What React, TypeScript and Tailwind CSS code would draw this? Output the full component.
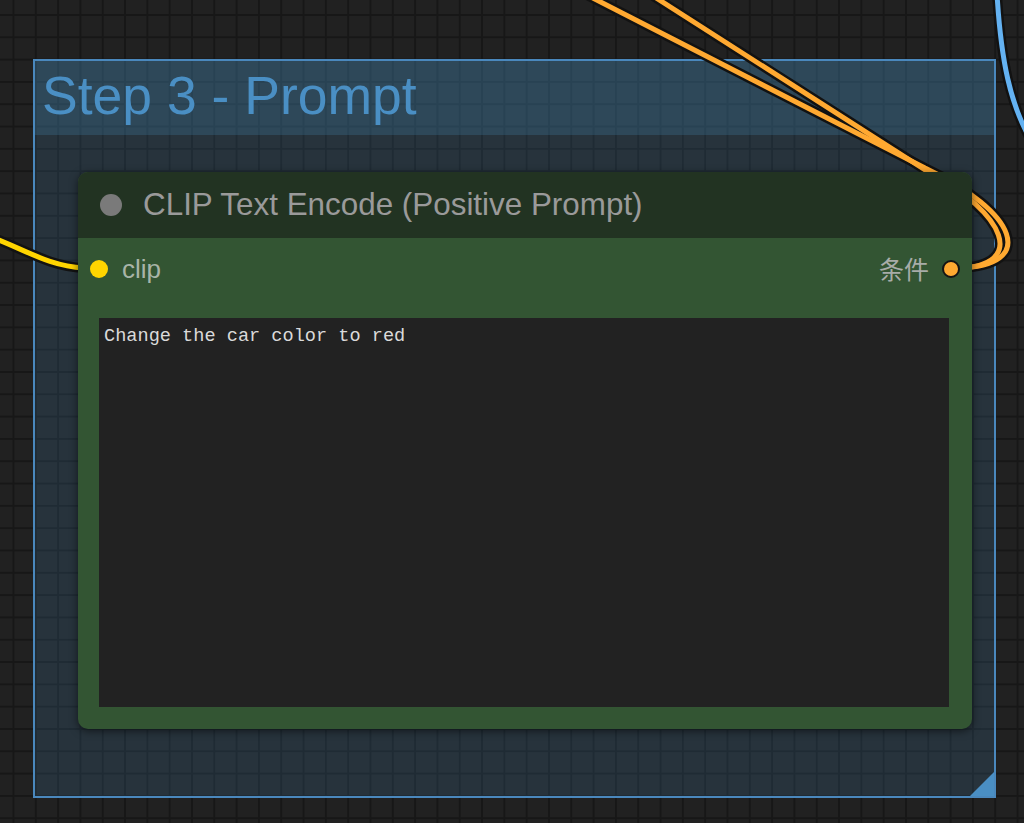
import React from "react"

const sans = "font-['Liberation_Sans',Arial,sans-serif]"

function Wires() {
  return (
    <svg className="pointer-events-none absolute inset-0" width={1024} height={823} fill="none">
      {/* dark outlines under each link */}
      <g stroke="#121212" strokeWidth={10} strokeLinecap="round">
        <path d="M -20 233 C 20 246, 45 266, 84 268" />
        <path d="M 958 268 C 1038 266, 1018 212, 925 168 L 585 -6" />
        <path d="M 958 268 C 1027 266, 1007 214, 927 171 L 650 -6" />
        <path d="M 997 -6 C 1001 60, 1010 105, 1032 142" />
      </g>
      <g strokeWidth={5} strokeLinecap="round">
        <path d="M -20 233 C 20 246, 45 266, 84 268" stroke="#ffd500" />
        <path d="M 958 268 C 1038 266, 1018 212, 925 168 L 585 -6" stroke="#ffa931" />
        <path d="M 958 268 C 1027 266, 1007 214, 927 171 L 650 -6" stroke="#ffa931" />
        <path d="M 997 -6 C 1001 60, 1010 105, 1032 142" stroke="#64b2f2" />
      </g>
    </svg>
  )
}

function Group() {
  return (
    <div className="absolute left-[33px] top-[59px] flex h-[739px] w-[963px] flex-col border-2 border-[#4a88bd]">
      <div className="h-[74px] bg-[rgba(63,120,158,0.45)] pl-[7px] pt-[8px]">
        <span className={`${sans} text-[53.5px] leading-[53px] text-[#4a8fc4]`}>Step 3 - Prompt</span>
      </div>
      <div className="flex-1 bg-[rgba(63,120,158,0.22)]" />
      <div className="absolute bottom-0 right-0 h-[24px] w-[24px] bg-[#4a8fc4] [clip-path:polygon(100%_0,100%_100%,0_100%)]" />
    </div>
  )
}

function Node() {
  return (
    <div
      className={`${sans} absolute left-[78px] top-[172px] flex h-[557px] w-[894px] flex-col overflow-hidden rounded-[10px] bg-[#335533] shadow-[0_2px_8px_rgba(0,0,0,0.55)]`}
    >
      <div className="flex h-[66px] items-center gap-[21px] bg-[#223322] pl-[22px]">
        <span className="h-[22px] w-[22px] rounded-full bg-[#7a7a7a]" />
        <span className="text-[31.4px] text-[#9a9a9a]">CLIP Text Encode (Positive Prompt)</span>
      </div>

      <div className="flex h-[62px] items-center justify-between pl-[12px] pr-[12px]">
        <div className="flex items-center gap-[14px]">
          <span className="h-[18px] w-[18px] rounded-full bg-[#ffd500]" />
          <span className="text-[26px] text-[#a8b4a8]">clip</span>
        </div>
        <div className="flex items-center gap-[13px]">
          <span className="font-['Noto_Sans_CJK_SC',sans-serif] text-[25px] text-[#a8aca8]">条件</span>
          <span className="h-[18px] w-[18px] rounded-full border-2 border-[#151515] bg-[#ffa931]" />
        </div>
      </div>

      <div className="mb-[22px] ml-[21px] mr-[23px] mt-[18px] flex-1 bg-[#222222] px-[5px] pt-[8px]">
        <p className="font-['Liberation_Mono',monospace] text-[18.6px] leading-[22px] text-[#dadada]">
          Change the car color to red
        </p>
      </div>
    </div>
  )
}

export default function App() {
  return (
    <div className="relative h-[823px] w-[1024px] overflow-hidden bg-[#212121] bg-[linear-gradient(to_right,#171717_2px,transparent_2px),linear-gradient(to_bottom,#171717_2px,transparent_2px)] bg-[length:22.32px_22.32px] bg-[position:12.5px_14px]">
      <Group />
      <Wires />
      <Node />
    </div>
  )
}
